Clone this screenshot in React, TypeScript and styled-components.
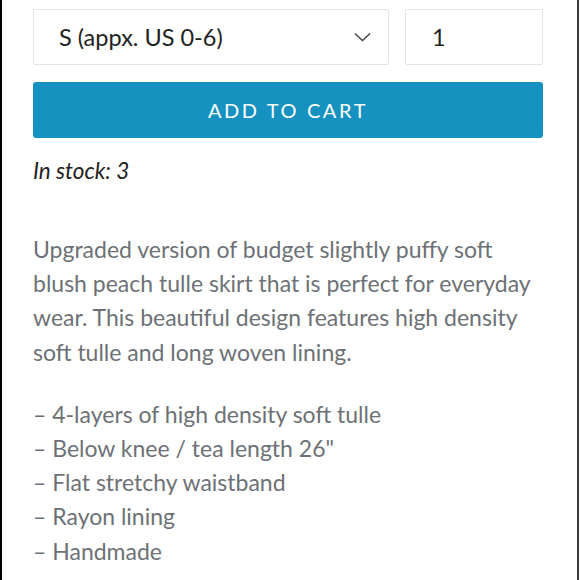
import React from "react";
import styled, { createGlobalStyle } from "styled-components";

const GlobalStyle = createGlobalStyle`
  html, body {
    margin: 0;
    padding: 0;
    background: #ffffff;
  }
  body {
    font-family: Lato, "Open Sans", sans-serif;
  }
`;

const Frame = styled.div`
  box-sizing: border-box;
  width: 579px;
  height: 580px;
  overflow: hidden;
  border-left: 2px solid #000000;
  border-right: 2px solid #3a3a3a;
  padding: 9px 34px 0 31px;
  background: #ffffff;
`;

const OptionsRow = styled.div`
  display: flex;
  gap: 16px;
  height: 56px;
`;

const Field = styled.div<{ $width: number; $pad: number }>`
  box-sizing: border-box;
  width: ${(p) => p.$width}px;
  height: 100%;
  display: flex;
  align-items: center;
  justify-content: space-between;
  padding: 0 17px 0 ${(p) => p.$pad}px;
  border: 1px solid #e3e3e3;
  border-radius: 2px;
  font-size: 23.5px;
  color: #222222;
`;

const CartButton = styled.button`
  box-sizing: border-box;
  display: block;
  width: 100%;
  height: 56px;
  margin-top: 17px;
  border: none;
  border-radius: 3px;
  background: #1592bf;
  color: #ffffff;
  font-family: Lato, sans-serif;
  font-size: 20px;
  letter-spacing: 2.6px;
  text-transform: uppercase;
  padding: 0;
`;

const Stock = styled.p`
  margin: 20px 0 0;
  font-size: 22.5px;
  line-height: 26px;
  font-style: italic;
  color: #222222;
`;

const Description = styled.p<{ $top: number }>`
  margin: ${(p) => p.$top}px 0 0;
  font-size: 23px;
  line-height: 34.2px;
  color: #6d7176;
`;

const Chevron = () => (
  <svg width="17" height="10" viewBox="0 0 17 10" fill="none">
    <path d="M1 1.5 L8.5 8.5 L16 1.5" stroke="#444" strokeWidth="1.4" />
  </svg>
);

const features = [
  "4-layers of high density soft tulle",
  'Below knee / tea length 26"',
  "Flat stretchy waistband",
  "Rayon lining",
  "Handmade",
];

export default function App() {
  return (
    <>
      <GlobalStyle />
      <Frame>
        <OptionsRow>
          <Field $width={356} $pad={25}>
            <span>S (appx. US 0-6)</span>
            <Chevron />
          </Field>
          <Field $width={138} $pad={26}>
            <span>1</span>
          </Field>
        </OptionsRow>
        <CartButton>Add to cart</CartButton>
        <Stock>In stock: 3</Stock>
        <Description $top={48}>
          Upgraded version of budget slightly puffy soft blush peach tulle
          skirt that is perfect for everyday wear. This beautiful design
          features high density soft tulle and long woven lining.
        </Description>
        <Description $top={28}>
          {features.map((f) => (
            <React.Fragment key={f}>
              – {f}
              <br />
            </React.Fragment>
          ))}
        </Description>
      </Frame>
    </>
  );
}
